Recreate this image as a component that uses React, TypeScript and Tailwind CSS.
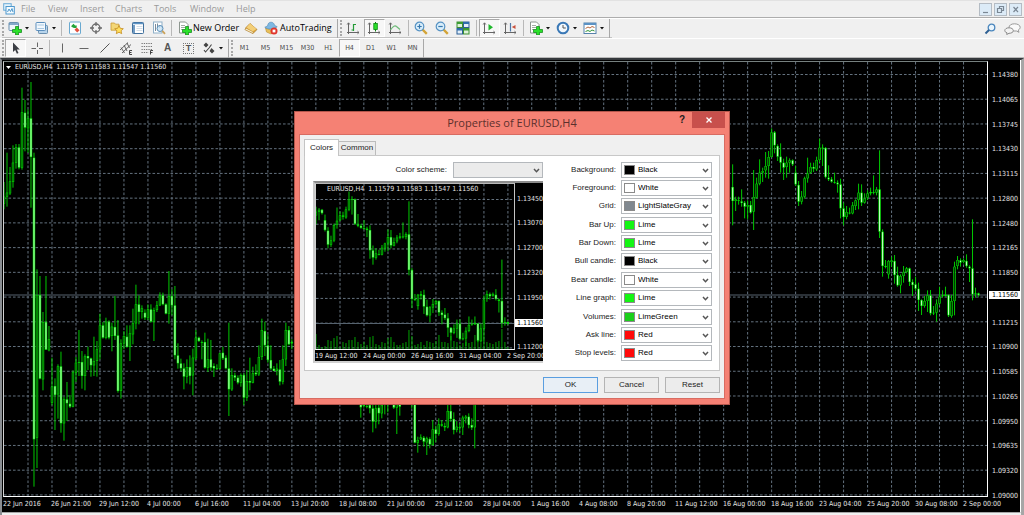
import { ReactNode } from "react";

// open, high, low, close, measured downwards from the top of the price scale
type Bar = [number, number, number, number];
type Series = { start: number; base: number; bars: Bar[] };

const juneBars: Bar[] = [
  [443, 378, 460, 422], [422, 290, 452, 410], [412, 333, 417, 376], [378, 268, 395, 320],
  [320, 264, 338, 274], [274, 264, 340, 335], [335, 95, 341, 169], [170, 132, 286, 215],
  [217, 160, 290, 187], [187, 78, 455, 303], [305, 290, 1292, 1150], [1145, 640, 1236, 717],
  [717, 660, 970, 968], [970, 768, 1003, 798], [798, 660, 882, 881], [883, 810, 886, 850],
  [1040, 905, 1048, 992], [990, 967, 1122, 1017], [1015, 925, 1088, 931], [931, 887, 1130, 1102],
  [1102, 1022, 1154, 1030], [1030, 978, 1095, 1042], [1043, 1017, 1056, 1052], [1052, 943, 1054, 949],
  [950, 903, 978, 920], [920, 822, 960, 918], [918, 885, 998, 960], [960, 895, 1003, 901],
  [900, 872, 942, 907], [907, 905, 962, 928], [928, 842, 960, 915], [915, 855, 962, 880],
  [880, 773, 910, 808], [808, 798, 848, 845], [845, 785, 850, 797], [797, 793, 850, 845],
  [840, 800, 886, 812], [813, 720, 852, 840], [838, 792, 1010, 1005], [1005, 850, 1028, 862],
  [862, 825, 880, 840], [842, 808, 875, 873], [873, 808, 915, 832], [835, 758, 865, 802],
  [802, 686, 820, 745], [745, 718, 805, 768], [768, 748, 788, 757], [770, 760, 792, 785],
  [785, 745, 792, 760], [760, 745, 800, 797], [797, 755, 855, 762], [762, 735, 768, 748],
  [748, 709, 750, 718], [718, 710, 748, 745], [745, 742, 775, 773], [773, 645, 803, 720],
  [720, 700, 778, 748], [748, 690, 910, 898], [898, 862, 938, 922], [922, 908, 946, 937],
  [937, 922, 1000, 962], [962, 910, 982, 933], [933, 898, 985, 960], [958, 878, 1018, 905],
  [907, 822, 912, 845], [845, 842, 858, 855], [860, 853, 910, 858], [858, 830, 938, 935],
  [935, 848, 948, 910], [910, 852, 945, 935], [930, 922, 963, 937], [938, 925, 942, 937],
  [938, 890, 940, 892], [890, 872, 912, 907], [905, 898, 940, 937], [937, 800, 1080, 1000],
  [1000, 937, 1005, 957], [958, 950, 975, 965], [965, 958, 985, 980], [980, 952, 992, 957],
  [957, 952, 1048, 1025], [1025, 942, 1035, 975], [975, 905, 1003, 980], [980, 932, 982, 952],
  [950, 925, 960, 955], [955, 868, 960, 903], [903, 788, 912, 822], [825, 797, 900, 868],
  [868, 835, 920, 912], [912, 868, 942, 938], [938, 930, 946, 945], [945, 922, 958, 938],
  [940, 912, 988, 977], [977, 868, 985, 910], [910, 800, 930, 822], [822, 810, 868, 865],
  [862, 850, 880, 858],
];

const julyBars: Bar[] = [
  [28, 0, 68, 37], [30, 0, 38, 33], [33, 0, 40, 35], [30, 0, 55, 40],
  [40, 0, 112, 80], [80, 10, 100, 40], [38, 0, 88, 55], [55, 0, 70, 30],
  [28, 0, 58, 26], [28, 0, 52, 25], [20, 0, 25, 10], [25, 0, 42, 38],
  [38, 0, 117, 25], [20, 0, 62, 35], [20, 0, 24, 10], [10, 0, 24, 20],
  [20, 0, 24, 10], [20, 0, 40, 18], [20, 0, 145, 143], [143, 125, 173, 135],
  [133, 118, 135, 127], [128, 123, 155, 140], [142, 125, 180, 130], [132, 127, 160, 148],
  [150, 75, 152, 103], [103, 92, 142, 117], [117, 70, 122, 88], [88, 75, 95, 92],
  [93, 83, 108, 97], [97, 30, 100, 48], [48, 28, 80, 72], [72, 52, 118, 105],
  [105, 78, 112, 95], [97, 85, 112, 96], [97, 62, 120, 68], [70, 60, 85, 65],
  [65, 55, 100, 90], [90, 70, 105, 98], [97, 0, 160, 25],
];

const augustBars: Bar[] = [
  [393, 325, 508, 435], [435, 422, 465, 430], [432, 422, 446, 433], [436, 400, 452, 441],
  [440, 435, 487, 452], [452, 433, 490, 447], [447, 435, 473, 470], [467, 342, 522, 423],
  [425, 365, 428, 383], [383, 310, 388, 350], [350, 335, 378, 345], [343, 288, 365, 330],
  [330, 285, 368, 303], [303, 217, 305, 229], [229, 225, 292, 268], [270, 265, 315, 302],
  [302, 262, 350, 320], [320, 308, 372, 335], [333, 302, 365, 320], [320, 307, 350, 313],
  [313, 310, 330, 325], [350, 330, 390, 385], [387, 375, 450, 437], [437, 405, 445, 422],
  [422, 362, 428, 367], [367, 305, 380, 352], [350, 320, 353, 333], [333, 320, 348, 338],
  [340, 302, 345, 312], [312, 248, 318, 275], [275, 265, 330, 277], [276, 273, 367, 363],
  [365, 328, 375, 370], [370, 363, 380, 377], [378, 350, 383, 380], [380, 373, 410, 385],
  [385, 368, 487, 457], [457, 440, 508, 483], [483, 450, 490, 468], [470, 455, 475, 470],
  [472, 438, 475, 448], [450, 430, 462, 433], [432, 383, 460, 410], [410, 385, 450, 440],
  [440, 412, 443, 428], [425, 403, 432, 412], [412, 395, 418, 408], [408, 358, 415, 410],
  [410, 393, 418, 400], [400, 283, 546, 527], [527, 520, 662, 630], [630, 612, 637, 633],
  [655, 612, 668, 615], [618, 602, 632, 613], [615, 597, 683, 657], [657, 632, 692, 688],
  [688, 655, 712, 660], [660, 630, 680, 648], [648, 633, 652, 637], [637, 635, 690, 678],
  [678, 670, 720, 687], [685, 662, 705, 698], [698, 680, 765, 732], [732, 730, 777, 750],
  [750, 720, 755, 735], [735, 703, 768, 718], [718, 702, 778, 772], [772, 750, 777, 770],
  [770, 730, 797, 743], [743, 692, 748, 722], [720, 703, 725, 718], [720, 692, 722, 716],
  [717, 715, 783, 778], [780, 717, 785, 735], [735, 617, 778, 632], [630, 600, 640, 612],
  [613, 607, 632, 620], [618, 607, 622, 612], [615, 595, 635, 630], [632, 628, 678, 637],
  [637, 490, 733, 715], [713, 695, 725, 712], [712, 710, 722, 717],
];

const series: Series[] = [
  { start: 0, base: 0, bars: juneBars },
  { start: 119, base: 1017, bars: julyBars },
  { start: 243, base: 0, bars: augustBars },
];

const previewSeries: Series[] = [{ start: 0, base: 0, bars: augustBars.slice(18) }];

const volumes = [
  15, 4, 2, 3, 9, 8, 11, 13, 2, 7, 6, 9, 9, 12, 7, 5, 7, 4, 12, 13, 5, 4, 7, 6, 11, 12, 7, 4, 4, 6,
  7, 19, 13, 4, 5, 7, 4, 8, 7, 6, 8, 14, 7, 7, 6, 13, 8, 7, 4, 6, 7, 6, 7, 14, 8, 6, 9, 7, 6, 5, 7,
  8, 20, 7, 2,
];

const prices = [
  "1.14380", "1.14065", "1.13745", "1.13430", "1.13115", "1.12800", "1.12480", "1.12165", "1.11850",
  "", "1.11215", "1.10900", "1.10585", "1.10265", "1.09950", "1.09635", "1.09320", "1.09000",
];
const dates = [
  "22 Jun 2016", "26 Jun 21:00", "29 Jun 12:00", "4 Jul 00:00", "6 Jul 16:00", "11 Jul 04:00",
  "13 Jul 20:00", "18 Jul 08:00", "21 Jul 00:00", "25 Jul 12:00", "28 Jul 04:00", "1 Aug 16:00",
  "4 Aug 08:00", "8 Aug 20:00", "11 Aug 12:00", "16 Aug 00:00", "18 Aug 16:00", "23 Aug 04:00",
  "25 Aug 20:00", "30 Aug 08:00", "2 Sep 00:00",
];
const previewPrices = ["1.13450", "1.13070", "1.12700", "1.12320", "1.11950", "1.11560", "1.11200"];
const previewDates = ["19 Aug 12:00", "24 Aug 00:00", "26 Aug 16:00", "31 Aug 04:00", "2 Sep 20:00"];

const PITCH = 2.9985;

type PlotProps = {
  series: Series[];
  toY: (v: number) => number;
  firstX: number;
  gridX: number;
  gridY: number;
  columns: number;
  rows: number;
  priceY: number;
  volume?: number[];
  volumeY?: number;
};

const Plot = ({ series, toY, firstX, gridX, gridY, columns, rows, priceY, volume, volumeY = 0 }: PlotProps) => {
  return (
    <svg className="block h-full w-full" aria-hidden="true">
      <g stroke="#64727f" strokeDasharray="2.6 1.9">
        {Array.from({ length: columns }, (_, i) => (
          <line key={i} x1={gridX + i * PITCH * 8} x2={gridX + i * PITCH * 8} y1="0" y2="100%" />
        ))}
        {Array.from({ length: rows }, (_, i) => (
          <line key={i} x1="0" x2="100%" y1={gridY + i * 24.73} y2={gridY + i * 24.73} />
        ))}
      </g>
      <line x1="0" x2="100%" y1={priceY} y2={priceY} stroke="#56636f" />
      {volume?.map((v, i) => (
        <rect key={i} x={firstX + i * PITCH - 0.5} y={volumeY - v} width="1" height={v} fill="#00a000" />
      ))}
      {series.map((s) =>
        s.bars.map(([open, high, low, close], i) => {
          const x = firstX + (s.start + i) * PITCH;
          const top = toY(Math.min(open, close) + s.base);
          const height = Math.max(toY(Math.max(open, close) + s.base) - top, 0.8);
          const y1 = toY(high + s.base);
          return (
            <g key={s.start + i}>
              <rect x={x - 0.5} y={y1} width="1" height={toY(low + s.base) - y1} fill="#00c800" />
              <rect x={x - 1.2} y={top} width="2.4" height={height} fill="#00e000" />
              {height > 1.6 && (
                <rect
                  x={x - 0.5}
                  y={top + 0.5}
                  width="1"
                  height={height - 1}
                  fill={close > open ? "#c8ffc8" : "#003400"}
                />
              )}
            </g>
          );
        }),
      )}
    </svg>
  );
};

const chartTitle = "EURUSD,H4\u00a0 1.11579 1.11583 1.11547 1.11560";

const MainChart = () => {
  return (
    <main className="flex min-h-[454px] flex-1 border-t-2 border-r-[3px] border-l-2 border-t-[#34383c] border-r-[#a6a6a6] border-l-[#8a8e92] bg-[#f0f0f0]">
      <div className="mb-[2px] flex min-w-0 flex-1 border-r border-b border-r-white border-b-[#a6a6a6] bg-black pt-px pl-px font-['DejaVu_Sans_Condensed','DejaVu_Sans',sans-serif] text-[7px] leading-[8px] text-[#e4e4e4]">
        <div className="flex min-w-0 flex-1 flex-col">
          <div className="relative min-h-0 flex-1 border border-t-[#76807f] border-r-white border-b-white border-l-[#d0d0d0]">
            <Plot
              series={series}
              toY={(v) => v / 3 - 6}
              firstX={0}
              gridX={24}
              gridY={12.5}
              columns={41}
              rows={18}
              priceY={233}
            />
            <div className="absolute top-px left-[2px] flex items-center gap-[4px]">
              <svg width="5" height="3" viewBox="0 0 5 3" aria-hidden="true">
                <path d="M0 0h5L2.500 3z" fill="#fff" />
              </svg>
              <h1 className="whitespace-nowrap">{chartTitle}</h1>
            </div>
          </div>
          <div className="flex h-[15px] pt-[3px]">
            {dates.map((d) => (
              <span key={d} className="w-[48px] shrink-0 whitespace-nowrap">
                {d}
              </span>
            ))}
          </div>
        </div>
        <div className="relative flex w-[32px] flex-col justify-between pt-[10px] pb-[12px] pl-[4px]">
          {prices.map((p, i) => (
            <span key={i} className="h-[8px]">
              {p}
            </span>
          ))}
          <span className="absolute top-[230px] right-0 left-px bg-white pl-[3px] text-black">1.11560</span>
        </div>
      </div>
    </main>
  );
};

const Preview = () => {
  return (
    <div className="flex h-[182px] overflow-hidden border-2 border-t-[#8c8c8c] border-r-0 border-b-[#d0d0d0] border-l-[#c8c8c8] bg-black font-['DejaVu_Sans_Condensed','DejaVu_Sans',sans-serif] text-[7px] leading-[8px] text-[#e4e4e4]">
      <div className="flex w-[200px] shrink-0 flex-col">
        <div className="relative min-h-0 flex-1 border border-t-[#b8b8b8] border-r-[#c4c4c4] border-b-white border-l-[#d0d0d0]">
          <Plot
            series={previewSeries}
            toY={(v) => 139.5 + (v - 717) * 0.2815}
            firstX={0}
            gridX={24}
            gridY={15.5}
            columns={8}
            rows={7}
            priceY={139.5}
            volume={volumes}
            volumeY={165}
          />
          <span className="absolute top-px left-[11px] whitespace-nowrap">{chartTitle}</span>
        </div>
        <div className="flex h-[11px] pt-[2px]">
          {previewDates.map((d) => (
            <span key={d} className="w-[48px] shrink-0 whitespace-nowrap">
              {d}
            </span>
          ))}
        </div>
      </div>
      <div className="flex flex-1 flex-col justify-between pt-[12px] pb-[9px]">
        {previewPrices.map((p) => (
          <span key={p} className={p === "1.11560" ? "bg-white pl-[2px] text-black" : "pl-[2px]"}>
            {p}
          </span>
        ))}
      </div>
    </div>
  );
};

/* ---------- toolbar icons ---------- */

const Svg = ({ children, size = 14 }: { children: ReactNode; size?: number }) => (
  <svg width={size} height={size} viewBox="0 0 14 14" fill="none" className="shrink-0" aria-hidden="true">
    {children}
  </svg>
);

const Plus = () => (
  <path d="M7.500 5.500h3V8.500h3v3h-3V14h-3v-2.500h-3v-3h3z" fill="#2ae02a" stroke="#0a8212" strokeWidth=".7" />
);

const Caret = () => (
  <svg width="4" height="3" viewBox="0 0 4 3" className="shrink-0" aria-hidden="true">
    <path d="M0 0h4L2 2.500z" fill="#111" />
  </svg>
);

const NewChartIcon = () => (
  <Svg>
    <rect x="1" y="1.500" width="9.500" height="8" rx=".8" fill="#eef5fb" stroke="#6a8fae" />
    <path d="M1 3h9.500" stroke="#5f8fb8" strokeWidth="1.500" />
    <Plus />
  </Svg>
);
const ProfilesIcon = () => (
  <Svg>
    <rect x="3.500" y="4.500" width="9" height="8" rx=".8" fill="#b9d5ec" stroke="#6a8fae" />
    <rect x="1" y="1.500" width="9.500" height="8" rx=".8" fill="#f2f8fd" stroke="#5c8fbd" />
    <path d="M2.500 4h6.500M2.500 7.500h6.500" stroke="#a9c8e2" />
  </Svg>
);
const MarketIcon = () => (
  <Svg>
    <rect x="1.500" y="1" width="11" height="12" rx="1" fill="#fff" stroke="#6aa9d0" />
    <path d="m3 5.300 2.500-2.500 1.600 1.600 1.700.2-.3 2.500L6 7 4.800 6.500z" fill="#23a53a" />
    <path d="m6.500 8.800 2.300-2.300 2.700 2.700-2.300 2.300z" fill="#e2513f" />
  </Svg>
);
const TargetIcon = () => (
  <Svg>
    <circle cx="7" cy="7" r="4" stroke="#6a6a6a" strokeWidth="1.300" />
    <path d="M7 1v4M7 9v4M1 7h4M9 7h4" stroke="#6a6a6a" strokeWidth="1.300" />
  </Svg>
);
const NavigatorIcon = () => (
  <Svg>
    <path d="M1 2h3.500l1 1.200H9v6H1z" fill="#f3d676" stroke="#c99b35" strokeWidth=".8" />
    <path d="m9 4.500 1.300 2.800 3 .4-2.200 2 .6 3L9 11.200l-2.700 1.500.6-3-2.200-2 3-.4z" fill="#ffdf5d" stroke="#c48d22" strokeWidth=".8" />
  </Svg>
);
const TerminalIcon = () => (
  <Svg>
    <rect x="1.500" y="1.500" width="11" height="11" rx=".8" fill="#fff" stroke="#3f6f9c" />
    <path d="M2 2.500h10" stroke="#5c93c4" strokeWidth="1.500" />
    <path d="M3 4v8" stroke="#4f83b5" strokeWidth="1.600" />
    <path d="M5.500 5.500h6M5.500 7.500h6M5.500 9.500h6" stroke="#c8d6e2" strokeWidth=".8" />
  </Svg>
);
const TesterIcon = () => (
  <Svg>
    <rect x="1.500" y="1" width="8.500" height="11" fill="#fff" stroke="#8fb0c8" />
    <path d="M3.500 3v7M5.500 2.500v5M7.500 4v3" stroke="#6a7f90" strokeWidth=".9" />
    <circle cx="8" cy="7.500" r="3" fill="#c9e3f5" fillOpacity=".8" stroke="#5b8fb8" />
    <path d="m10.300 9.800 2.700 3" stroke="#caa25a" strokeWidth="1.800" />
  </Svg>
);
const NewOrderIcon = () => (
  <Svg>
    <path d="M1.500 1h6l2.500 2.500V12H1.500z" fill="#fff" stroke="#8d968f" />
    <path d="M3 4.500h4M3 6.500h4M3 8.500h2" stroke="#8a968c" strokeWidth=".8" />
    <Plus />
  </Svg>
);
const EditorIcon = () => (
  <Svg>
    <path d="m1 8.500 1-2L6 2.500l7 6-4 4z" fill="#dda63c" stroke="#a8761f" strokeWidth=".7" />
    <path d="M6 2.500 12.500 8 8.500 10.500 2.500 6.500z" fill="#f3cf78" />
    <path d="m1 8.500 8 4 .2-1.500L2 7.200z" fill="#fff6da" stroke="#a8761f" strokeWidth=".4" />
  </Svg>
);
const AutoTradingIcon = () => (
  <Svg>
    <path d="M1.500 7 7 9l5-2.500-1 4L7 13l-4.500-2z" fill="#e9c05b" stroke="#b98b2e" strokeWidth=".6" />
    <path d="M.8 6.200 3.500 5C4 2 5.300 1.200 7 1.200S10 2 10.700 4.500l2.500 1.200C10.500 8.500 3.500 8.800.8 6.200z" fill="#7db8e2" stroke="#4f86b5" strokeWidth=".6" />
    <circle cx="10" cy="10" r="3.500" fill="#e0342b" />
    <rect x="8.600" y="8.600" width="2.800" height="2.800" fill="#fff" />
  </Svg>
);
const Axes = () => <path d="M2.500 2v11M1 11.500h12M1.200 3.500l1.300-1.700 1.300 1.700M11.500 10.200l1.500 1.300-1.500 1.300" stroke="#666" />;
const BarsIcon = () => (
  <Svg>
    <Axes />
    <path d="M7.500 3v7M7.500 3.500H10M5.500 9h2" stroke="#239b35" strokeWidth="1.200" />
  </Svg>
);
const CandlesIcon = () => (
  <Svg>
    <Axes />
    <path d="M8.500 1v9.500" stroke="#0a7d12" />
    <rect x="6.800" y="2.500" width="3.500" height="6" fill="#2be02b" stroke="#0a8a12" strokeWidth=".8" />
  </Svg>
);
const LineIcon = () => (
  <Svg>
    <Axes />
    <path d="M2.500 9C5 5 7 4 8.500 5.500L12 8.500" stroke="#6dbb78" strokeWidth="1.200" />
  </Svg>
);
const ZoomIcon = ({ plus }: { plus?: boolean }) => (
  <Svg>
    <path d="m8.500 8.500 4.300 4.300" stroke="#d3a437" strokeWidth="2.400" />
    <circle cx="5.500" cy="5.500" r="4.300" fill="#d8edfa" stroke="#5793c4" strokeWidth="1.200" />
    <path d={plus ? "M3.300 5.500h4.400M5.500 3.300v4.400" : "M3.300 5.500h4.400"} stroke="#3577ae" strokeWidth="1.200" />
  </Svg>
);
const TileIcon = () => (
  <Svg>
    <rect x="1" y="1" width="5.500" height="5.500" fill="#dff3d8" stroke="#3c8f33" />
    <rect x="7.500" y="1" width="5.500" height="5.500" fill="#e3effa" stroke="#2a5f96" />
    <rect x="1" y="7.500" width="5.500" height="5.500" fill="#e3effa" stroke="#2a5f96" />
    <rect x="7.500" y="7.500" width="5.500" height="5.500" fill="#dff3d8" stroke="#3c8f33" />
    <path d="M1 2h5.500M7.500 8.500H13" stroke="#3c9d33" strokeWidth="2" />
    <path d="M7.500 2H13M1 8.500h5.500" stroke="#2f6fae" strokeWidth="2" />
  </Svg>
);
const ScrollIcon = () => (
  <Svg>
    <Axes />
    <path d="m6.500 3 4.500 3.300-4.500 3.300z" fill="#1fb82c" />
  </Svg>
);
const ShiftIcon = () => (
  <Svg>
    <Axes />
    <path d="M7.500 2v8.500" stroke="#4f79a8" strokeWidth="1.200" />
    <path d="M12.500 4v4L8.800 6z" fill="#c8503c" />
  </Svg>
);
const PeriodsIcon = () => (
  <Svg>
    <circle cx="7" cy="7" r="5.300" fill="#f2f8fd" stroke="#3a78b6" strokeWidth="2" />
    <path d="M7 4v3h2.800" stroke="#555" />
  </Svg>
);
const TemplatesIcon = () => (
  <Svg>
    <rect x="1" y="2" width="12" height="10.500" fill="#fff" stroke="#5582ab" />
    <path d="M1 3h12" stroke="#5b92c4" strokeWidth="2" />
    <path d="m2.500 7.500 2.500-1.500 2 1 2-1.500 2.500 1" stroke="#b5663c" />
    <path d="m2.500 10.500 2.500-1 2 1 2-1.500 2.500 1" stroke="#33963b" />
  </Svg>
);
const CursorIcon = () => (
  <Svg>
    <path d="M4 1.500v9.500l2.200-2 1.700 3.700 1.600-.8L7.800 8.500h3z" fill="#3c3f45" />
  </Svg>
);
const CrossIcon = () => (
  <Svg>
    <path d="M7.500 1.500V6M7.500 9v4M1.500 7.500H6M9 7.500h4" stroke="#666" />
  </Svg>
);
const VLineIcon = () => (
  <Svg>
    <path d="M6.500 2.500v9" stroke="#666" />
  </Svg>
);
const HLineIcon = () => (
  <Svg>
    <path d="M2.500 7.500h9" stroke="#666" />
  </Svg>
);
const TrendIcon = () => (
  <Svg>
    <path d="m2.500 11.500 9-9" stroke="#555" />
  </Svg>
);
const ChannelIcon = () => (
  <Svg>
    <path d="m1 9 8-7.500M3 12l9-8.500M2 6.500 5.500 12M5 4l3 6M8 2l2.500 5" stroke="#555" strokeWidth=".9" />
    <path d="M13 9.500h-2.500v4H13M10.500 11.500h2" stroke="#333" strokeWidth=".9" />
  </Svg>
);
const FiboIcon = () => (
  <Svg>
    <path d="M1.500 2.500h11M1.500 5.500h11M1.500 8.500h11M1.500 11.500h7" stroke="#777" strokeDasharray="1.300 1" />
    <path d="M13 9.500h-2.500v4M10.500 11.500h2" stroke="#333" strokeWidth=".9" />
  </Svg>
);
const ArrowsIcon = () => (
  <Svg>
    <path d="M4 1.500 6.500 4 4 6.500 1.500 4zM9.500 7 12.500 10l-2.500 2.500L7.500 10z" fill="#444" />
    <path d="m2 9 1.500 2L7 7l2.500-3.500" stroke="#444" strokeWidth="1.100" />
  </Svg>
);

/* ---------- toolbar parts ---------- */

const Grip = () => (
  <span className="mr-px h-[16px] border-l-2 border-dotted border-[#a8a8a8]" aria-hidden="true" />
);
const Sep = () => <span className="mx-[2px] h-[16px] w-px bg-[#b8b8b8]" aria-hidden="true" />;
const EndSep = () => <span className="mx-[2px] h-[19px] w-px bg-[#a8a8a8]" aria-hidden="true" />;

const Tool = ({ label, pressed, children }: { label: string; pressed?: boolean; children: ReactNode }) => (
  <button
    type="button"
    aria-label={label}
    className={
      pressed
        ? "flex h-[18px] w-[21px] items-center justify-center border border-t-[#a8a8a8] border-r-white border-b-white border-l-[#a8a8a8] bg-[#f7f7f7]"
        : "flex h-[18px] w-[21px] items-center justify-center"
    }
  >
    {children}
  </button>
);

const MenuTool = ({ label, children }: { label: string; children: ReactNode }) => (
  <button type="button" aria-label={label} className="flex h-[18px] w-[27px] items-center gap-[3px] pl-[3px]">
    {children}
    <Caret />
  </button>
);

const menus = [
  { name: "File", width: "w-[27px]" },
  { name: "View", width: "w-[32px]" },
  { name: "Insert", width: "w-[35px]" },
  { name: "Charts", width: "w-[39px]" },
  { name: "Tools", width: "w-[36px]" },
  { name: "Window", width: "w-[46px]" },
  { name: "Help", width: "w-[30px]" },
];

const MenuBar = () => {
  return (
    <header className="flex h-[18px] items-center border-t border-b border-t-[#e2e2e2] border-b-[#adadad] bg-[#f0f0f0] pr-[2px] pl-[3px]">
      <svg width="12" height="12" viewBox="0 0 12 12" fill="none" className="mr-[6px]" aria-hidden="true">
        <rect x=".7" y=".7" width="7.500" height="6.500" fill="#e4f3fc" stroke="#6aaad6" />
        <rect x="3" y="3.500" width="8.300" height="7.500" fill="#f4fbff" stroke="#4e98cd" />
        <path d="m4.500 9 1.500-3 1.500 2.500L9 5.500l1 3.500" stroke="#4e98cd" />
      </svg>
      <nav className="flex flex-1">
        {menus.map((m) => (
          <button key={m.name} type="button" className={`${m.width} text-left text-[9px] leading-[12px] text-[#9a9a9a]`}>
            {m.name}
          </button>
        ))}
      </nav>
      <div className="flex gap-[2px]">
        {[
          { label: "Minimize", d: "M3 8.500h5" },
          { label: "Restore", d: "M4.500 4.500v-2h4v4h-2M2.500 4.500h4v4h-4z" },
          { label: "Close", d: "m3.500 3 4.500 5M8 3 3.500 8" },
        ].map((b) => (
          <button
            key={b.label}
            type="button"
            aria-label={b.label}
            className="flex h-[13px] w-[13px] items-center justify-center border border-[#b4bcc4] bg-[#dcebf7]"
          >
            <svg width="11" height="11" viewBox="0 0 11 11" fill="none" aria-hidden="true">
              <path d={b.d} stroke="#7a8794" strokeWidth="1.200" />
            </svg>
          </button>
        ))}
      </div>
    </header>
  );
};

const StandardBar = () => {
  return (
    <div className="flex h-[20px] items-center border-t border-t-white bg-[#f0f0f0] pr-[3px] pl-[2px]">
      <div className="flex h-full items-center border-b border-b-[#c4c4c4]">
        <Grip />
        <MenuTool label="New chart">
          <NewChartIcon />
        </MenuTool>
        <MenuTool label="Profiles">
          <ProfilesIcon />
        </MenuTool>
        <Sep />
        <Tool label="Market Watch"><MarketIcon /></Tool>
        <Tool label="Data Window"><TargetIcon /></Tool>
        <Tool label="Navigator"><NavigatorIcon /></Tool>
        <Tool label="Terminal"><TerminalIcon /></Tool>
        <Tool label="Strategy Tester"><TesterIcon /></Tool>
        <Sep />
        <button type="button" className="flex items-center gap-px pr-px pl-[4px] text-[9px] leading-[12px] whitespace-nowrap text-black">
          <NewOrderIcon />
          New Order
        </button>
        <Tool label="MetaEditor"><EditorIcon /></Tool>
        <button type="button" className="flex items-center gap-[2px] px-[3px] text-[9px] leading-[12px] whitespace-nowrap text-black">
          <AutoTradingIcon />
          AutoTrading
        </button>
        <EndSep />
        <Grip />
        <Tool label="Bar Chart"><BarsIcon /></Tool>
        <Tool label="Candlesticks" pressed><CandlesIcon /></Tool>
        <Tool label="Line Chart"><LineIcon /></Tool>
        <Sep />
        <Tool label="Zoom In"><ZoomIcon plus /></Tool>
        <Tool label="Zoom Out"><ZoomIcon /></Tool>
        <Tool label="Tile Windows"><TileIcon /></Tool>
        <Sep />
        <Tool label="Auto Scroll" pressed><ScrollIcon /></Tool>
        <Tool label="Chart Shift"><ShiftIcon /></Tool>
        <Sep />
        <MenuTool label="Indicators"><NewOrderIcon /></MenuTool>
        <MenuTool label="Periods"><PeriodsIcon /></MenuTool>
        <MenuTool label="Templates"><TemplatesIcon /></MenuTool>
        <EndSep />
      </div>
      <div className="ml-auto flex items-center gap-[8px]">
        <button type="button" aria-label="Search">
          <svg width="12" height="12" viewBox="0 0 12 12" fill="none" aria-hidden="true">
            <circle cx="7.500" cy="4.500" r="3.300" fill="#eaf5fd" stroke="#4a86bd" strokeWidth="1.300" />
            <path d="M5 7 1.500 10.500" stroke="#2e5f92" strokeWidth="2" />
          </svg>
        </button>
        <button type="button" aria-label="Messages">
          <svg width="17" height="12" viewBox="0 0 17 12" fill="none" aria-hidden="true">
            <path d="M10.500.8c3.300 0 5.700 1.500 5.700 3.500 0 1.200-.8 2.100-2 2.700l.8 2.300L12.500 8H10C7 8 5 6.500 5 4.400S7.200.8 10.500.8z" fill="#fafafa" stroke="#999" />
            <path d="M5 4.800c2.500 0 4.300 1.100 4.300 2.800S7.500 10.300 5 10.300l-2.300 1.200.3-1.700C1.500 9.300.8 8.500.8 7.600.8 6 2.500 4.800 5 4.800z" fill="#f3f3f3" stroke="#8a8a8a" />
          </svg>
        </button>
      </div>
    </div>
  );
};

const timeframes = ["M1", "M5", "M15", "M30", "H1", "H4", "D1", "W1", "MN"];

const LineBar = () => {
  return (
    <div className="flex h-[20px] items-center border-t border-b border-t-white border-b-[#b8b8b8] bg-[#f0f0f0] pl-[2px]">
      <Grip />
      <Tool label="Cursor" pressed><CursorIcon /></Tool>
      <Tool label="Crosshair"><CrossIcon /></Tool>
      <Sep />
      <Tool label="Vertical line"><VLineIcon /></Tool>
      <Tool label="Horizontal line"><HLineIcon /></Tool>
      <Tool label="Trendline"><TrendIcon /></Tool>
      <Tool label="Equidistant channel"><ChannelIcon /></Tool>
      <Tool label="Fibonacci retracement"><FiboIcon /></Tool>
      <Tool label="Text">
        <span className="font-['Liberation_Sans',sans-serif] text-[10px] leading-none font-bold text-[#555]">A</span>
      </Tool>
      <Tool label="Text label">
        <span className="border border-dotted border-[#777] px-[2px] font-['Liberation_Sans',sans-serif] text-[9px] leading-[9px] font-bold text-[#555]">
          T
        </span>
      </Tool>
      <MenuTool label="Arrows"><ArrowsIcon /></MenuTool>
      <EndSep />
      <Grip />
      <div className="flex font-['DejaVu_Sans_Condensed','DejaVu_Sans',sans-serif] text-[7px] leading-[8px] text-[#4a4a4a]">
        {timeframes.map((t) => (
          <button
            key={t}
            type="button"
            className={
              t === "H4"
                ? "h-[18px] w-[21px] border border-t-[#a8a8a8] border-r-white border-b-white border-l-[#a8a8a8] bg-[#f7f7f7]"
                : "h-[18px] w-[21px]"
            }
          >
            {t}
          </button>
        ))}
      </div>
      <span className="h-[19px] w-px bg-[#a8a8a8]" aria-hidden="true" />
    </div>
  );
};

/* ---------- dialog ---------- */

const colorRows = [
  { label: "Background:", value: "Black", swatch: "bg-black" },
  { label: "Foreground:", value: "White", swatch: "bg-white" },
  { label: "Grid:", value: "LightSlateGray", swatch: "bg-[#808890]" },
  { label: "Bar Up:", value: "Lime", swatch: "bg-[#14f514]" },
  { label: "Bar Down:", value: "Lime", swatch: "bg-[#14f514]" },
  { label: "Bull candle:", value: "Black", swatch: "bg-black" },
  { label: "Bear candle:", value: "White", swatch: "bg-white" },
  { label: "Line graph:", value: "Lime", swatch: "bg-[#14f514]" },
  { label: "Volumes:", value: "LimeGreen", swatch: "bg-[#1bcf1b]" },
  { label: "Ask line:", value: "Red", swatch: "bg-[#ff0a0a]" },
  { label: "Stop levels:", value: "Red", swatch: "bg-[#ff0a0a]" },
];
const colorNames = ["Black", "White", "LightSlateGray", "Lime", "LimeGreen", "Red"];

const Chevron = () => (
  <svg
    width="7"
    height="5"
    viewBox="0 0 7 5"
    fill="none"
    className="pointer-events-none absolute top-[6px] right-[3px]"
    aria-hidden="true"
  >
    <path d="m1 1 2.500 2.700L6 1" stroke="#555" strokeWidth="1.500" />
  </svg>
);

const ColorRow = ({ label, value, swatch }: { label: string; value: string; swatch: string }) => (
  <label className="flex items-center justify-end gap-[5px]">
    {label}
    <span className="relative w-[91px]">
      <select
        defaultValue={value}
        className="block h-[16px] w-full appearance-none border border-[#b4b8bc] bg-white pl-[16px] text-black"
      >
        {colorNames.map((c) => (
          <option key={c}>{c}</option>
        ))}
      </select>
      <span className={`pointer-events-none absolute top-[3px] left-[3px] h-[10px] w-[11px] border border-[#8a8a8a] ${swatch}`} />
      <Chevron />
    </span>
  </label>
);

const PropertiesDialog = () => {
  return (
    <div
      role="dialog"
      aria-label="Properties of EURUSD,H4"
      className="w-[436px] border border-[#b4564c] bg-[#f58174] px-[4px] pb-[5px] font-['Liberation_Sans',sans-serif] text-[8px] leading-[10px] text-[#1c1c1c]"
    >
      <div className="relative flex h-[22px] items-center justify-center">
        <h2 className="font-['Open_Sans',sans-serif] text-[11px] leading-[16px] text-[#5c302c]">Properties of EURUSD,H4</h2>
        <div className="absolute top-0 right-0 flex items-start">
          <button type="button" aria-label="Help" className="h-[16px] w-[20px] text-[10px] leading-[16px] font-bold">
            ?
          </button>
          <button type="button" aria-label="Close" className="flex h-[16px] w-[33px] items-center justify-center bg-[#c8504c]">
            <svg width="6" height="6" viewBox="0 0 6 6" aria-hidden="true">
              <path d="m.5.5 5 5M5.500.5l-5 5" stroke="#fff" strokeWidth="1.300" />
            </svg>
          </button>
        </div>
      </div>
      <div className="border border-[#d86c62] bg-[#f0f0f0] px-[4px] pt-[4px] pb-[5px]">
        <div className="flex items-end" role="tablist">
          <button
            type="button"
            role="tab"
            aria-selected="true"
            className="relative -mb-px h-[17px] w-[35px] border border-b-0 border-[#c4c4c4] bg-white"
          >
            Colors
          </button>
          <button type="button" role="tab" aria-selected="false" className="h-[14px] w-[37px] border border-b-0 border-l-0 border-[#bcbcbc] bg-[#ececec]">
            Common
          </button>
        </div>
        <div className="flex justify-between border border-[#c8c8c8] bg-white pt-[6px] pr-[7px] pb-[7px] pl-[8px]">
          <div className="w-[230px]">
            <label className="mb-[3px] flex items-center justify-end gap-[6px]">
              Color scheme:
              <span className="relative w-[90px]">
                <select className="block h-[16px] w-full appearance-none border border-[#b4b8bc] bg-[#ebebeb] pl-[4px]" defaultValue="">
                  <option value=""></option>
                </select>
                <Chevron />
              </span>
            </label>
            <Preview />
          </div>
          <div className="flex flex-col justify-between pb-px">
            {colorRows.map((r) => (
              <ColorRow key={r.label} {...r} />
            ))}
          </div>
        </div>
        <div className="mt-[6px] flex justify-end gap-[6px]">
          <button type="button" className="h-[16px] w-[55px] border border-[#5a9ee0] bg-[#e8eff6]">
            OK
          </button>
          <button type="button" className="h-[16px] w-[55px] border border-[#b4b4b4] bg-[#ececec]">
            Cancel
          </button>
          <button type="button" className="h-[16px] w-[55px] border border-[#b4b4b4] bg-[#ececec]">
            Reset
          </button>
        </div>
      </div>
    </div>
  );
};

const App = () => {
  return (
    <div className="flex min-h-screen flex-col overflow-hidden bg-[#f0f0f0] font-['Open_Sans',sans-serif]">
      <MenuBar />
      <StandardBar />
      <LineBar />
      <MainChart />
      <div className="fixed inset-0 flex items-center justify-center">
        <PropertiesDialog />
      </div>
    </div>
  );
};

export default App;
